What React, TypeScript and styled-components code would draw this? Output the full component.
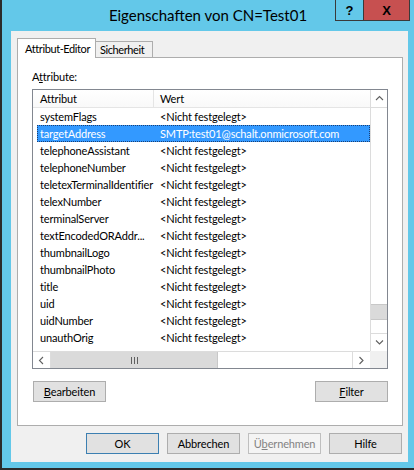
import React from "react";
import styled, { createGlobalStyle } from "styled-components";

const GlobalStyle = createGlobalStyle`
  html, body {
    margin: 0;
    padding: 0;
    background: #ffffff;
  }
  body {
    font-family: "Segoe UI", Lato, "Liberation Sans", sans-serif;
    font-size: 11px;
    letter-spacing: -0.15px;
    color: #000000;
  }
`;

const Window = styled.div`
  width: 414px;
  height: 470px;
  box-sizing: border-box;
  background: #63c8e9;
  border-left: 2px solid #2b2b2b;
  border-bottom: 2px solid #2b2b2b;
  display: flex;
  flex-direction: column;
  overflow: hidden;
`;

const TitleBar = styled.div`
  height: 31px;
  flex: none;
  display: grid;
  grid-template-columns: 1fr auto 1fr;
`;

const Title = styled.div`
  grid-column: 2;
  align-self: center;
  font-size: 15px;
  letter-spacing: 0;
  white-space: nowrap;
  padding-bottom: 1px;
`;

const CaptionButtons = styled.div`
  grid-column: 3;
  justify-self: end;
  align-self: start;
  display: flex;
  margin-right: 4px;
`;

const CaptionButton = styled.div<{ $close?: boolean }>`
  width: ${(p) => (p.$close ? 46 : 29)}px;
  height: 21px;
  box-sizing: border-box;
  border: 1px solid #3a3a3a;
  border-top: none;
  border-left: ${(p) => (p.$close ? "none" : "1px solid #3a3a3a")};
  background: ${(p) => (p.$close ? "#c75050" : "#63c8e9")};
  display: flex;
  align-items: center;
  justify-content: center;
  font-family: "Liberation Sans", Arial, sans-serif;
  font-weight: bold;
  font-size: 13px;
  letter-spacing: 0;
`;

const Client = styled.div`
  flex: 1;
  margin: 0 6px 6px 9px;
  background: #f0f0f0;
  padding: 7px 5px 8px 6px;
  display: flex;
  flex-direction: column;
  min-height: 0;
`;

const TabStrip = styled.div`
  display: flex;
  align-items: flex-end;
  height: 20px;
  margin-bottom: -1px;
  position: relative;
  z-index: 1;
`;

const Tab = styled.div<{ $active?: boolean }>`
  box-sizing: border-box;
  width: ${(p) => (p.$active ? 79 : 57)}px;
  height: ${(p) => (p.$active ? 20 : 16)}px;
  margin-bottom: ${(p) => (p.$active ? 0 : 1)}px;
  padding-left: ${(p) => (p.$active ? 7 : 4)}px;
  padding-bottom: ${(p) => (p.$active ? 1 : 0)}px;
  border: 1px solid #adadad;
  border-bottom: none;
  border-left: ${(p) => (p.$active ? "1px solid #adadad" : "none")};
  background: ${(p) => (p.$active ? "#ffffff" : "#f0f0f0")};
  display: flex;
  align-items: center;
  white-space: nowrap;
  letter-spacing: -0.4px;
`;

const Panel = styled.div`
  flex: 1;
  background: #ffffff;
  border: 1px solid #adadad;
  padding: 12px 14px 0 14px;
  display: flex;
  flex-direction: column;
`;

const Label = styled.div`
  height: 14px;
  line-height: 14px;
  margin-bottom: 5px;
`;

const ListBox = styled.div`
  height: 280px;
  box-sizing: border-box;
  border: 1px solid #828790;
  display: grid;
  grid-template-columns: 1fr 17px;
  grid-template-rows: 1fr 17px;
  overflow: hidden;
`;

const Content = styled.div`
  overflow: hidden;
  display: flex;
  flex-direction: column;
`;

const Header = styled.div`
  height: 18px;
  flex: none;
  box-sizing: border-box;
  display: grid;
  grid-template-columns: 121px 1fr;
  border-bottom: 1px solid #e5e5e5;
  background: linear-gradient(#ffffff, #f9f9f9);
`;

const HeaderCell = styled.div<{ $divider?: boolean }>`
  display: flex;
  align-items: center;
  padding-left: ${(p) => (p.$divider ? 6 : 7)}px;
  border-right: ${(p) => (p.$divider ? "none" : "1px solid #e5e5e5")};
`;

const Row = styled.div<{ $selected?: boolean }>`
  height: 17px;
  flex: none;
  box-sizing: border-box;
  margin-left: 4px;
  display: grid;
  grid-template-columns: 117px 1fr;
  align-items: center;
  white-space: nowrap;
  background: ${(p) => (p.$selected ? "#3399ff" : "transparent")};
  color: ${(p) => (p.$selected ? "#ffffff" : "#000000")};
  outline: ${(p) => (p.$selected ? "1px dotted #1b3f73" : "none")};
  outline-offset: -1px;
`;

const Cell = styled.div<{ $value?: boolean }>`
  padding-left: ${(p) => (p.$value ? 6 : 3)}px;
  overflow: visible;
`;

const VScroll = styled.div`
  border-left: 1px solid #dcdcdc;
  background: #ffffff;
  display: flex;
  flex-direction: column;
`;

const ArrowBox = styled.div<{ $edge: "top" | "bottom" | "left" | "right" }>`
  flex: none;
  width: ${(p) => (p.$edge === "left" || p.$edge === "right" ? "17px" : "auto")};
  height: ${(p) => (p.$edge === "top" || p.$edge === "bottom" ? "17px" : "auto")};
  display: flex;
  align-items: center;
  justify-content: center;
  border-${(p) =>
    p.$edge === "top" ? "bottom" : p.$edge === "bottom" ? "top" : p.$edge === "left" ? "right" : "left"}: 1px solid #dcdcdc;
`;

const Track = styled.div<{ $horizontal?: boolean }>`
  flex: 1;
  display: flex;
  flex-direction: ${(p) => (p.$horizontal ? "row" : "column")};
`;

const VThumb = styled.div`
  height: 16px;
  flex: none;
  box-sizing: border-box;
  background: #dadada;
  border-top: 1px solid #c8c8c8;
  border-bottom: 1px solid #c8c8c8;
`;

const HScroll = styled.div`
  border-top: 1px solid #dcdcdc;
  background: #ffffff;
  display: flex;
`;

const HThumb = styled.div`
  width: 167px;
  flex: none;
  box-sizing: border-box;
  background: #dadada;
  border-right: 1px solid #c8c8c8;
  display: flex;
  align-items: center;
  justify-content: center;
  gap: 2px;
`;

const Grip = styled.span`
  width: 1px;
  height: 7px;
  background: #606060;
`;

const Corner = styled.div`
  background: #f0f0f0;
`;

const ButtonRow = styled.div<{ $footer?: boolean }>`
  display: flex;
  justify-content: ${(p) => (p.$footer ? "flex-end" : "space-between")};
  gap: 8px;
  margin-top: ${(p) => (p.$footer ? 7 : 12)}px;
  padding: ${(p) => (p.$footer ? "0 1px 0 0" : "0 0 0 1px")};
`;

const Button = styled.div<{ $default?: boolean; $disabled?: boolean }>`
  width: 73px;
  height: 21px;
  box-sizing: border-box;
  background: ${(p) => (p.$disabled ? "#f4f4f4" : "#e1e1e1")};
  border: 1px solid ${(p) => (p.$default ? "#3c7fb1" : p.$disabled ? "#bfbfbf" : "#adadad")};
  color: ${(p) => (p.$disabled ? "#838383" : "#000000")};
  display: flex;
  align-items: center;
  justify-content: center;
  padding-bottom: 1px;
`;

const Chevron = ({ dir }: { dir: "up" | "down" | "left" | "right" }) => {
  const paths: Record<string, string> = {
    up: "M1 5 L4.5 1.5 L8 5",
    down: "M1 1.5 L4.5 5 L8 1.5",
    left: "M5 1 L1.5 4.5 L5 8",
    right: "M1.5 1 L5 4.5 L1.5 8",
  };
  const horiz = dir === "left" || dir === "right";
  return (
    <svg width={horiz ? 7 : 9} height={horiz ? 9 : 7} viewBox={horiz ? "0 0 7 9" : "0 0 9 7"}>
      <path d={paths[dir]} fill="none" stroke="#606060" strokeWidth="1.1" />
    </svg>
  );
};

const attributes = [
  ["systemFlags", "<Nicht festgelegt>"],
  ["targetAddress", "SMTP:test01@schalt.onmicrosoft.com"],
  ["telephoneAssistant", "<Nicht festgelegt>"],
  ["telephoneNumber", "<Nicht festgelegt>"],
  ["teletexTerminalIdentifier", "<Nicht festgelegt>"],
  ["telexNumber", "<Nicht festgelegt>"],
  ["terminalServer", "<Nicht festgelegt>"],
  ["textEncodedORAddr...", "<Nicht festgelegt>"],
  ["thumbnailLogo", "<Nicht festgelegt>"],
  ["thumbnailPhoto", "<Nicht festgelegt>"],
  ["title", "<Nicht festgelegt>"],
  ["uid", "<Nicht festgelegt>"],
  ["uidNumber", "<Nicht festgelegt>"],
  ["unauthOrig", "<Nicht festgelegt>"],
];

const App = () => {
  const selected = "targetAddress";
  const thumbOffset = 196;

  return (
    <>
      <GlobalStyle />
      <Window>
        <TitleBar>
          <Title>Eigenschaften von CN=Test01</Title>
          <CaptionButtons>
            <CaptionButton>?</CaptionButton>
            <CaptionButton $close>X</CaptionButton>
          </CaptionButtons>
        </TitleBar>

        <Client>
          <TabStrip>
            <Tab $active>Attribut-Editor</Tab>
            <Tab>Sicherheit</Tab>
          </TabStrip>

          <Panel>
            <Label>
              A<u>t</u>tribute:
            </Label>

            <ListBox>
              <Content>
                <Header>
                  <HeaderCell>Attribut</HeaderCell>
                  <HeaderCell $divider>Wert</HeaderCell>
                </Header>
                {attributes.map(([name, value]) => (
                  <Row key={name} $selected={name === selected}>
                    <Cell>{name}</Cell>
                    <Cell $value>{value}</Cell>
                  </Row>
                ))}
              </Content>

              <VScroll>
                <ArrowBox $edge="top">
                  <Chevron dir="up" />
                </ArrowBox>
                <Track>
                  <div style={{ height: thumbOffset, flex: "none" }} />
                  <VThumb />
                </Track>
                <ArrowBox $edge="bottom">
                  <Chevron dir="down" />
                </ArrowBox>
              </VScroll>

              <HScroll>
                <ArrowBox $edge="left">
                  <Chevron dir="left" />
                </ArrowBox>
                <Track $horizontal>
                  <HThumb>
                    <Grip />
                    <Grip />
                    <Grip />
                  </HThumb>
                </Track>
                <ArrowBox $edge="right">
                  <Chevron dir="right" />
                </ArrowBox>
              </HScroll>
              <Corner />
            </ListBox>

            <ButtonRow>
              <Button>
                <u>B</u>earbeiten
              </Button>
              <Button>
                <u>F</u>ilter
              </Button>
            </ButtonRow>
          </Panel>

          <ButtonRow $footer>
            <Button $default>OK</Button>
            <Button>Abbrechen</Button>
            <Button $disabled>
              Ü<u>b</u>ernehmen
            </Button>
            <Button>Hilfe</Button>
          </ButtonRow>
        </Client>
      </Window>
    </>
  );
};

export default App;
